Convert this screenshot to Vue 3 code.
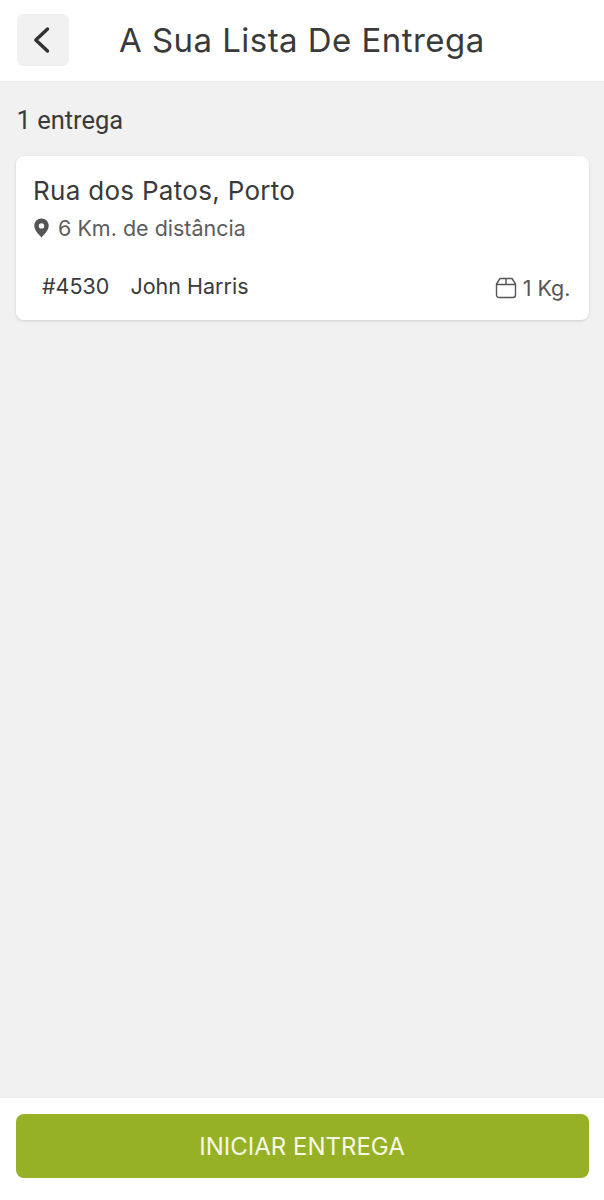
<template>
  <div class="page">
    <header class="topBar">
      <button class="backBtn">
        <svg width="20" height="30" viewBox="0 0 20 30">
          <path d="M14.500 4 L2.800 15 L14.500 26" fill="none" stroke="#333" stroke-width="3.400" stroke-linecap="round" stroke-linejoin="round" />
        </svg>
      </button>
      <h1>A Sua Lista De Entrega</h1>
    </header>

    <main class="content">
      <div class="count">1 entrega</div>
      <div class="card" v-for="item in deliveries" :key="item.id">
        <div class="street">{{ item.address }}</div>
        <div class="distance">
          <svg width="17" height="20" viewBox="0 0 16 20">
            <path fill-rule="evenodd" fill="#555" d="M8 .6C3.800.6.800 3.800.800 7.800.800 12.200 5.400 16.900 8 19.400c2.600-2.500 7.200-7.200 7.200-11.600C15.200 3.800 12.200.6 8 .6zm0 4.600a2.700 2.700 0 1 1 0 5.400 2.700 2.700 0 0 1 0-5.400z" />
          </svg>
          <span>{{ item.distance }}</span>
        </div>
        <div class="cardFoot">
          <span class="orderId">#{{ item.id }}</span>
          <span class="name">{{ item.name }}</span>
          <span class="weight">
            <svg width="22" height="22" viewBox="0 0 22 22">
              <path d="M5 1.500h12l3.500 5.500v11a2.500 2.500 0 0 1-2.500 2.500H4a2.500 2.500 0 0 1-2.500-2.500V7zM1.500 7.500h19M11 1.500v6" fill="none" stroke="#555" stroke-width="1.400" stroke-linejoin="round" />
            </svg>
            {{ item.weight }}
          </span>
        </div>
      </div>
    </main>

    <footer class="bottomBar">
      <button class="startBtn">INICIAR ENTREGA</button>
    </footer>
  </div>
</template>

<script setup>
import { ref } from 'vue'

const deliveries = ref([
  { id: 4530, address: 'Rua dos Patos, Porto', distance: '6 Km. de distância', name: 'John Harris', weight: '1 Kg.' }
])
</script>

<style>
html, body {
  margin: 0;
  padding: 0;
}
</style>

<style scoped>
.page {
  width: 604px;
  height: 1200px;
  display: flex;
  flex-direction: column;
  background: #f1f1f1;
  font-family: "Inter", "Liberation Sans", sans-serif;
  color: #3a3a3a;
}

.topBar {
  height: 82px;
  flex-shrink: 0;
  box-sizing: border-box;
  display: flex;
  align-items: center;
  padding: 0 17px 0;
  background: #fff;
  border-bottom: 1px solid #ececec;
}

.backBtn {
  width: 52px;
  height: 52px;
  margin-top: -1px;
  padding: 0;
  border: none;
  border-radius: 6px;
  background: #f1f1f1;
  display: flex;
  align-items: center;
  justify-content: center;
}

h1 {
  margin: -2px 0 0 50px;
  font-size: 33px;
  font-weight: 400;
  color: #3a3a3a;
  letter-spacing: 0.45px;
}

.content {
  flex: 1;
  padding: 0 15.5px;
}

.count {
  margin: 24px 0 21px 1px;
  font-size: 25.5px;
  line-height: 29px;
  color: #3a3a3a;
  font-family: "Roboto", sans-serif;
}

.card {
  height: 164px;
  box-sizing: border-box;
  padding: 20px 18px 0 17.5px;
  background: #fff;
  border-radius: 8px;
  box-shadow: 0 1px 3px rgba(0, 0, 0, 0.15);
}

.street {
  font-size: 26px;
  line-height: 30px;
  letter-spacing: 0.3px;
}

.distance {
  display: flex;
  align-items: center;
  gap: 8px;
  margin-top: 8px;
  font-size: 21.5px;
  line-height: 28px;
  color: #5c5c5c;
}

.cardFoot {
  display: flex;
  align-items: center;
  margin-top: 28px;
  padding-left: 9px;
  font-size: 21.5px;
  line-height: 28px;
}

.name {
  margin-left: 21px;
}

.weight {
  margin-left: auto;
  display: flex;
  align-items: center;
  gap: 6px;
  color: #555;
  padding-top: 4px;
  font-size: 21.5px;
}

.bottomBar {
  height: 102px;
  flex-shrink: 0;
  box-sizing: border-box;
  padding: 16px 15.5px 0;
  background: #fff;
}

.startBtn {
  width: 100%;
  height: 64px;
  border: none;
  border-radius: 8px;
  background: #97b126;
  color: #f6f8e6;
  font-family: "Inter", "Liberation Sans", sans-serif;
  font-size: 24px;
}
</style>
